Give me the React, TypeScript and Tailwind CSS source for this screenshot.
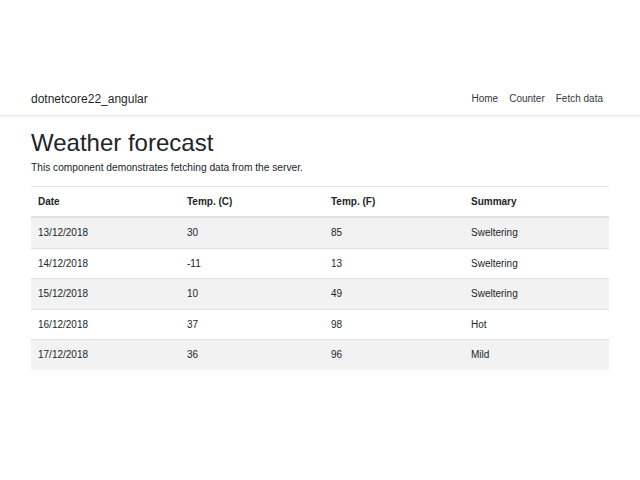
import React from "react";

const rows = [
  { date: "13/12/2018", c: "30", f: "85", s: "Sweltering" },
  { date: "14/12/2018", c: "-11", f: "13", s: "Sweltering" },
  { date: "15/12/2018", c: "10", f: "49", s: "Sweltering" },
  { date: "16/12/2018", c: "37", f: "98", s: "Hot" },
  { date: "17/12/2018", c: "36", f: "96", s: "Mild" },
];

export default function App() {
  return (
    <div className="min-h-[480px] bg-white text-[#212529] font-['Liberation_Sans',Arial,sans-serif]">
      <header className="pt-[82px] border-b border-[#e5e5e5] shadow-[0_1px_4px_rgba(0,0,0,0.05)]">
        <nav className="h-[33px] flex items-center justify-between pl-[31px] pr-[37px]">
          <span className="text-[12px] text-black/90">dotnetcore22_angular</span>
          <div className="flex items-center gap-[11px] text-[10px] text-[#343a40]">
            <span>Home</span>
            <span>Counter</span>
            <span>Fetch data</span>
          </div>
        </nav>
      </header>
      <main className="px-[31px]">
        <h1 className="mt-[12px] mb-[4px] text-[24px] leading-[29px] font-normal">Weather forecast</h1>
        <p className="text-[10.2px] leading-[14.4px] mb-[11px]">
          This component demonstrates fetching data from the server.
        </p>
        <table className="w-full text-[10px] table-fixed">
          <thead>
            <tr>
              <th className="w-[149px] text-left font-bold px-[7px] py-[7px] leading-[15px] border-t border-b-2 border-[#dee2e6]">Date</th>
              <th className="w-[144px] text-left font-bold px-[7px] py-[7px] leading-[15px] border-t border-b-2 border-[#dee2e6]">Temp. (C)</th>
              <th className="w-[140px] text-left font-bold px-[7px] py-[7px] leading-[15px] border-t border-b-2 border-[#dee2e6]">Temp. (F)</th>
              <th className="text-left font-bold px-[7px] py-[7px] leading-[15px] border-t border-b-2 border-[#dee2e6]">Summary</th>
            </tr>
          </thead>
          <tbody>
            {rows.map((r, i) => (
              <tr key={r.date} className={i % 2 === 0 ? "bg-[#f2f2f2]" : "bg-white"}>
                <td className="px-[7px] py-[7px] leading-[15.5px] border-t border-[#dee2e6]">{r.date}</td>
                <td className="px-[7px] py-[7px] leading-[15.5px] border-t border-[#dee2e6]">{r.c}</td>
                <td className="px-[7px] py-[7px] leading-[15.5px] border-t border-[#dee2e6]">{r.f}</td>
                <td className="px-[7px] py-[7px] leading-[15.5px] border-t border-[#dee2e6]">{r.s}</td>
              </tr>
            ))}
          </tbody>
        </table>
      </main>
    </div>
  );
}
